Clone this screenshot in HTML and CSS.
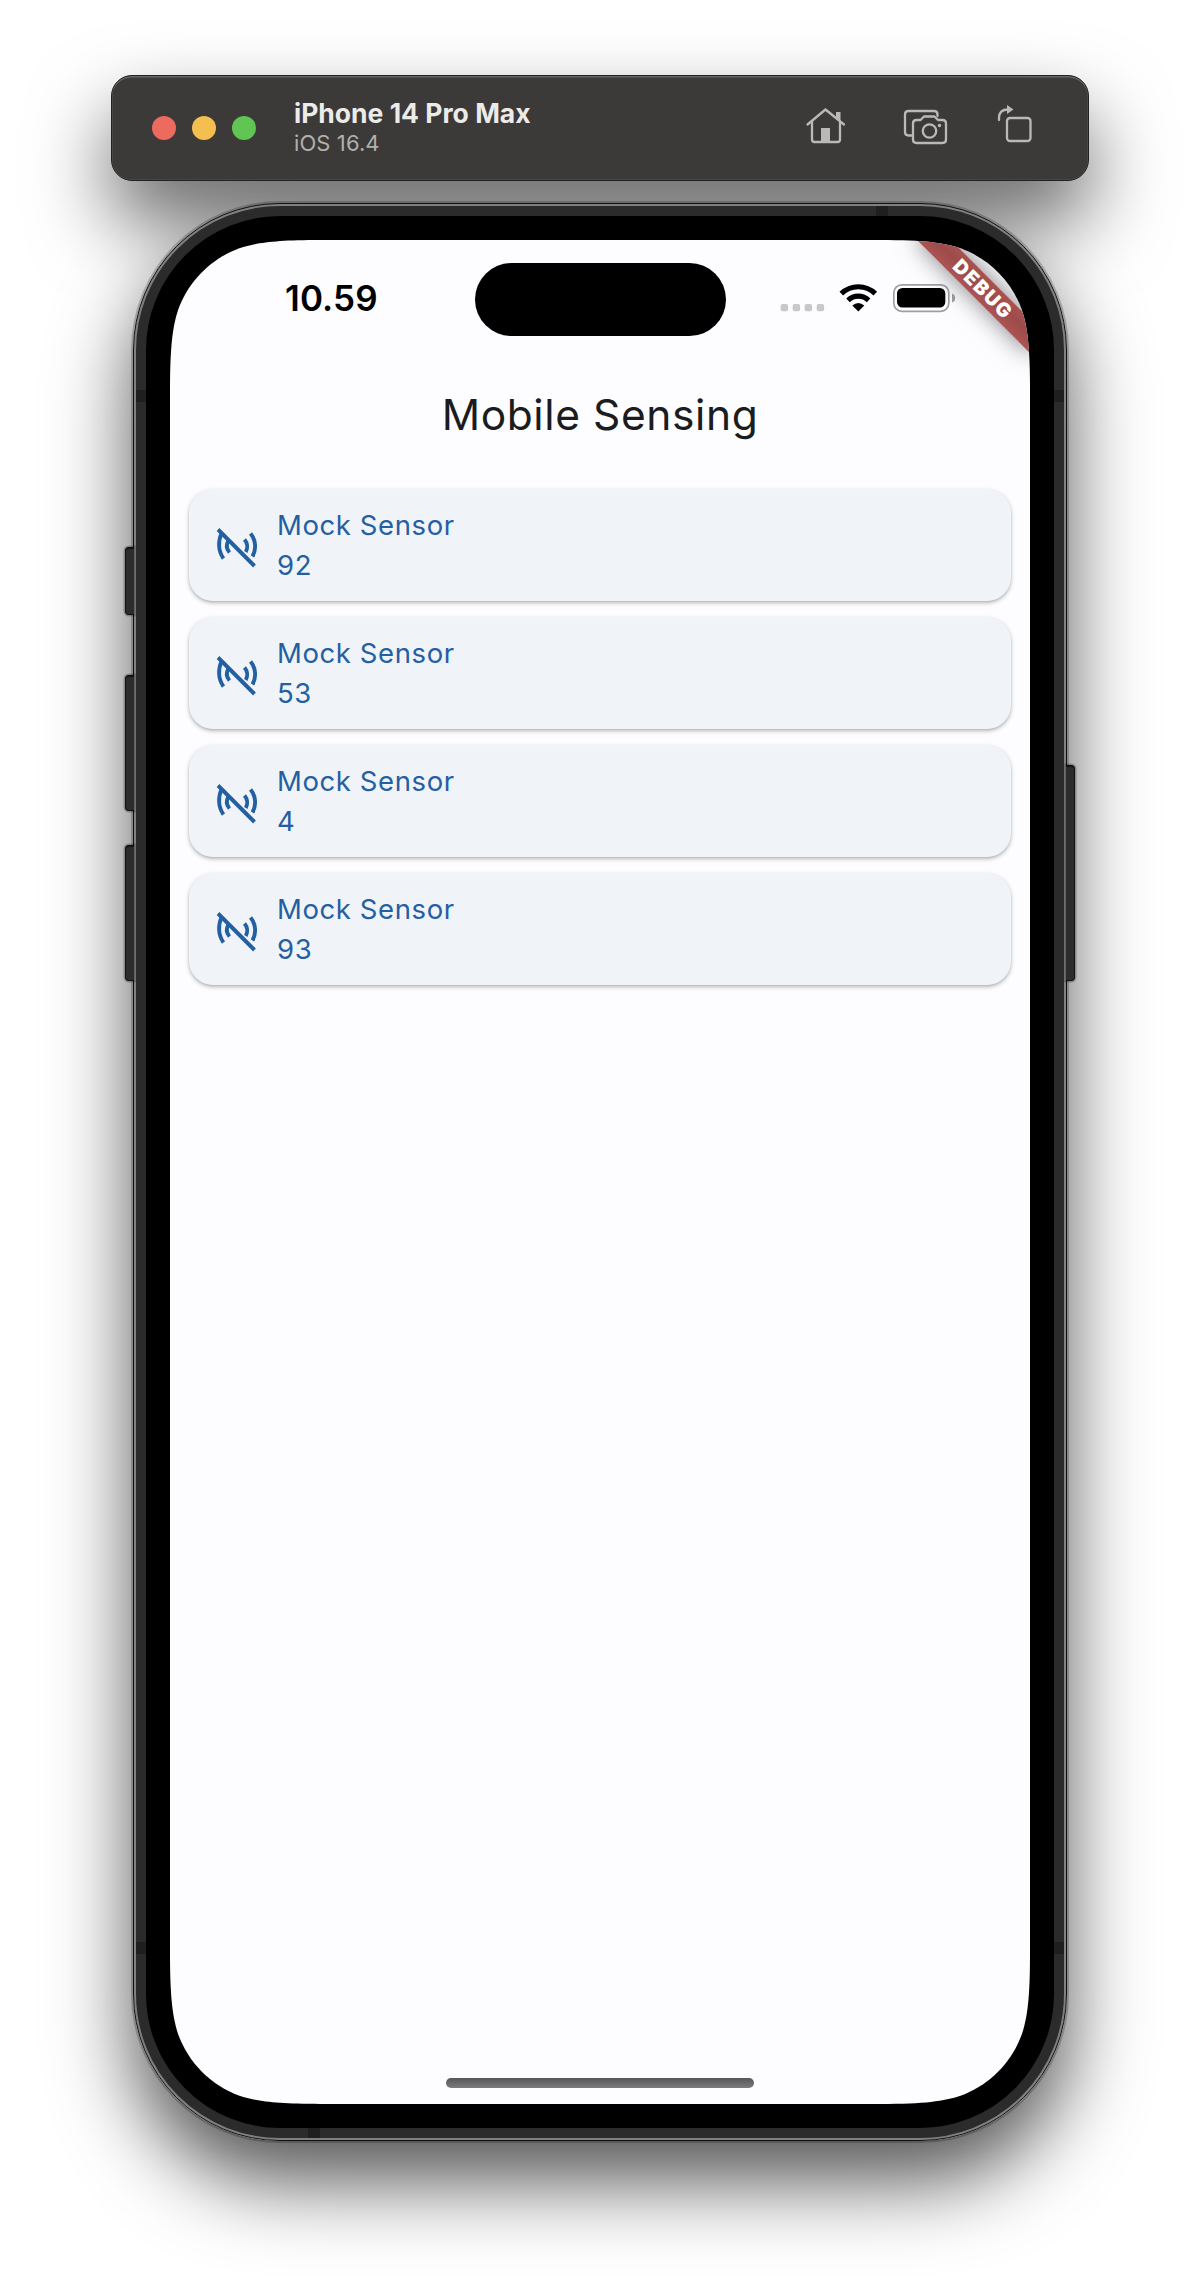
FILE: index.html
```html
<!DOCTYPE html>
<html lang="en">
<head>
<meta charset="utf-8">
<title>iPhone 14 Pro Max</title>
<link rel="stylesheet" href="styles.css">
</head>
<body>
<svg class="defs" aria-hidden="true">
  <symbol id="sensors-off" viewBox="0 0 54 52">
    <g fill="none" stroke="currentColor" stroke-width="3.9">
      <path d="M8 8.500L44.500 45"/>
      <path d="M11.500 12.500C8 20 8 30 13.500 37.500"/>
      <path d="M18.500 19.500C16 23.500 16.500 28 19.500 31.500"/>
      <path d="M34.500 18.500C37.500 22 38 27 35.800 31"/>
      <path d="M40.500 12.500C46 19 46.500 28.500 42.500 35.500"/>
    </g>
  </symbol>
</svg>
<header class="toolbar">
  <div class="lights"><i class="light red"></i><i class="light yellow"></i><i class="light green"></i></div>
  <div class="device"><div class="device-name">iPhone 14 Pro Max</div><div class="device-os">iOS 16.4</div></div>
  <svg class="tools" viewBox="800 100 240 50" width="240" height="50" fill="none" stroke="#b9b9b7" stroke-width="2.3" stroke-linecap="round" stroke-linejoin="round">
    <path d="M807.500 124.500L825.500 109.500L844 124.500M812 121V139.500Q812 142 814.500 142H837.500Q840 142 840 139.500V121"/>
    <path d="M836 112h4.500v9l-4.500-4z" fill="#b9b9b7" stroke="none"/>
    <path d="M821 128h9v14h-9z" fill="#b9b9b7" stroke="none"/>
    <path d="M912 135.500H908.500Q905 135.500 905 132V114.500Q905 111 908.500 111H934Q937.500 111 937.500 114.500V116"/>
    <path d="M916.500 120H920.500L924 116.500H934.500L938 120H942.500Q946 120 946 123.500V139.500Q946 143 942.500 143H916.500Q913 143 913 139.500V123.500Q913 120 916.500 120Z"/>
    <circle cx="929.500" cy="131" r="6.700"/><circle cx="939.500" cy="125.500" r="1.700" fill="#b9b9b7" stroke="none"/>
    <rect x="1007" y="118" width="23.500" height="23" rx="3"/>
    <path d="M999 120V118Q999 109.500 1008 109.500"/><path d="M1007 105l6.500 4.500-6.500 4.500z" fill="#b9b9b7" stroke="none"/>
  </svg>
</header>
<main class="phone">
  <i class="key left mute"></i><i class="key left up"></i><i class="key left down"></i><i class="key right"></i>
  <i class="band v l t"></i><i class="band v r t"></i><i class="band v l b"></i><i class="band v r b"></i><i class="band h top"></i><i class="band h bottom"></i>
  <div class="bezel">
    <div class="screen">
      <div class="status">
        <span class="time">10.59</span>
        <span class="island"></span>
        <svg class="signals" viewBox="780 280 176 34" width="176" height="34">
          <g fill="#c8c8ca"><rect x="780.700" y="304" width="7.400" height="7.300" rx="2"/><rect x="792.700" y="304" width="7.400" height="7.300" rx="2"/><rect x="804.700" y="304" width="7.400" height="7.300" rx="2"/><rect x="816.700" y="304" width="7.400" height="7.300" rx="2"/></g>
          <g fill="none" stroke="#000" stroke-width="5.200"><path d="M841.300 293.600A24.500 24.500 0 0 1 875.300 293.600"/><path d="M848 300.300A15 15 0 0 1 868.600 300.300"/></g>
          <path d="M858.300 311.500L852.300 305.500Q858.300 300.500 864.300 305.500Z"/>
          <rect x="893.800" y="284.800" width="55" height="26.500" rx="8" fill="none" stroke="#a0a0a2" stroke-width="1.700"/>
          <rect x="897" y="288" width="48.300" height="19.500" rx="5.500"/>
          <path d="M952 293.500Q955.200 294.500 955.200 298T952 302.500Z" fill="#a0a0a2"/>
        </svg>
      </div>
      <h1 class="title">Mobile Sensing</h1>
      <section class="cards">
        <article class="card"><svg class="icon"><use href="#sensors-off"/></svg><div class="reading"><div>Mock Sensor</div><div>92</div></div></article>
        <article class="card"><svg class="icon"><use href="#sensors-off"/></svg><div class="reading"><div>Mock Sensor</div><div>53</div></div></article>
        <article class="card"><svg class="icon"><use href="#sensors-off"/></svg><div class="reading"><div>Mock Sensor</div><div>4</div></div></article>
        <article class="card"><svg class="icon"><use href="#sensors-off"/></svg><div class="reading"><div>Mock Sensor</div><div>93</div></div></article>
      </section>
      <div class="home-bar"></div>
      <div class="debug">DEBUG</div>
    </div>
  </div>
</main>
</body>
</html>
```
FILE: styles.css
```css
* { box-sizing: border-box; }
html { background: #fff; }
body {
  margin: 0;
  padding-top: 75px;
  height: 2292px;
  overflow: hidden;
  isolation: isolate;
  font-family: Inter, "Liberation Sans", sans-serif;
  display: flex;
  flex-direction: column;
  align-items: center;
}
.defs { position: absolute; width: 0; height: 0; }

.toolbar {
  position: relative;
  width: 978px;
  height: 106px;
  flex: none;
  padding: 0 48px 0 40px;
  display: flex;
  align-items: center;
  border: 1px solid #1f201f;
  border-radius: 21px;
  background: #3b3a38;
  box-shadow: inset 0 1.500px 0 #666764, inset 0 0 0 .5px #555;
}
/* drop shadows sit below both windows */
.toolbar::before,
.phone::before {
  content: "";
  position: absolute;
  inset: -1px;
  z-index: -1;
  border-radius: 21px;
  box-shadow: 0 40px 80px rgba(0, 0, 0, .6);
}
.phone::before {
  border-radius: 147px;
  box-shadow: 0 40px 80px rgba(0, 0, 0, .67);
}
.lights { display: flex; gap: 16px; }
.light { width: 24px; height: 24px; border-radius: 50%; }
.red { background: #ed6a5e; }
.yellow { background: #f4bf4f; }
.green { background: #61c554; }
.device { margin: -1px 0 0 38px; white-space: nowrap; }
.device-name { font-size: 26.500px; font-weight: 700; line-height: 31px; letter-spacing: 0; color: #ebebea; }
.device-os { font-size: 22px; line-height: 28px; letter-spacing: .1px; color: #b0b0ae; }
.tools { margin: -6px 0 0 auto; }

.phone {
  position: relative;
  width: 934px;
  height: 1938px;
  margin-top: 22px;
  flex: none;
  padding: 2px;
  border-radius: 147px;
  background: #808080;
  border: 1px solid #111;
  box-shadow: 0 0 0 2px rgba(0, 0, 0, .2);
}
.bezel {
  height: 100%;
  padding: 24px;
  border: 10px solid #2b2b2b;
  border-radius: 144px;
  background: #000;
}
.screen {
  position: relative;
  width: 860px;
  height: 1864px;
  background: #fdfdff;
  display: flex;
  flex-direction: column;
  clip-path: path("M150 0H710C755 0 774 2.800 790.540 8.240C818.990 18.600 841.400 41.010 851.760 69.460C857.200 86 860 105 860 150V1714C860 1759 857.200 1778 851.760 1794.540C841.400 1822.990 818.990 1845.400 790.540 1855.760C774 1861.200 755 1864 710 1864H150C105 1864 86 1861.200 69.460 1855.760C41.010 1845.400 18.600 1822.990 8.240 1794.540C2.800 1778 0 1759 0 1714V150C0 105 2.800 86 8.240 69.460C18.600 41.010 41.010 18.600 69.460 8.240C86 2.800 105 0 150 0Z");
}

.key { position: absolute; width: 9px; background: #2b2c2b; border: 1px solid #111; border-top: 2px solid #111; box-shadow: 0 0 0 1.500px rgba(0, 0, 0, .25); }
.key.left { left: -9px; border-right: 0; border-radius: 4px 0 0 4px; }
.key.right { right: -9px; top: 561px; height: 216px; border-left: 0; border-radius: 0 4px 4px 0; }
.mute { top: 343px; height: 68px; }
.up { top: 471px; height: 136px; }
.down { top: 641px; height: 136px; }

.band { position: absolute; z-index: 1; background: #1f1f1f; }
.band.v { width: 10px; height: 12px; }
.band.h { width: 12px; height: 10px; }
.l { left: 2px; }
.r { right: 2px; }
.t { top: 186px; }
.b { bottom: 186px; }
.top { top: 2px; right: 178px; }
.bottom { bottom: 2px; left: 174px; }

.status { height: 120px; display: grid; grid-template-columns: 304.500px 251px 1fr; align-items: start; }
.time { margin: 37px 0 0 115px; font-size: 35px; line-height: 42px; font-weight: 600; letter-spacing: .1px; color: #000; }
.island { margin-top: 22.500px; height: 73.500px; border-radius: 37px; background: #000; }
.signals { margin: 40px 0 0 54.500px; }

.title { margin: 26px 0 0; height: 58px; line-height: 58px; text-align: center; font-size: 42.500px; font-weight: 400; letter-spacing: .6px; color: #1a1c1e; }
.cards { margin-top: 45px; padding: 0 19px 0 18.500px; display: flex; flex-direction: column; gap: 16px; }
.card { height: 112px; padding-left: 21.500px; display: flex; align-items: center; border-radius: 24px; background: #f0f4f9; color: #245fa2; box-shadow: 0 2px 4px rgba(0, 0, 0, .26), 0 1px 2px rgba(0, 0, 0, .08); }
.icon { width: 54px; height: 52px; margin-top: 3px; }
.reading { margin: 0 0 0 13px; font-size: 27.500px; line-height: 40px; letter-spacing: .6px; font-weight: 430; }
.home-bar { margin: auto auto 16px; width: 308px; height: 10px; border-radius: 5px; background: linear-gradient(#555557, #7c7c7e); }
.debug {
  position: absolute;
  left: 780px;
  top: 56px;
  width: 160px;
  height: 24px;
  padding-left: 3px;
  transform: rotate(45deg);
  transform-origin: 80px -56px;
  text-align: center;
  font-size: 19.500px;
  line-height: 24px;
  font-weight: 900;
  letter-spacing: 1.500px;
  color: #fff;
  background: linear-gradient(#a95252, #9c4b4b 45%, #ad5454);
  box-shadow: 0 0 24px rgba(0, 0, 0, .5);
}
```
